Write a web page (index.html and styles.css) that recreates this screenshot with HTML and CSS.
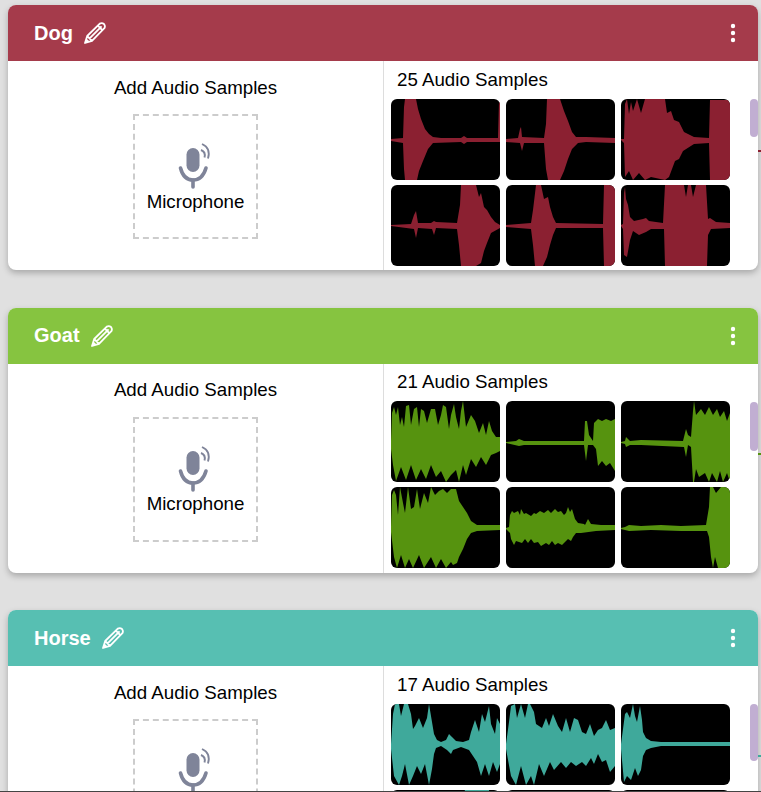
FILE: index.html
```html
<!DOCTYPE html>
<html lang="en">
<head>
<meta charset="utf-8">
<title>Audio classes</title>
<link rel="stylesheet" href="styles.css">
</head>
<body>
<svg class="defs" width="0" height="0" aria-hidden="true">
  <symbol id="pencil" viewBox="0 0 22 22">
    <path d="M1 21 L3.2 14 L15.8 1.6 Q18 .4 20 2 Q21.6 4 20.4 6.2 L8 18.8 Z M3.2 14 L8 18.8 M5.6 16.4 L17.6 4.4 M13.8 3.6 L18.4 8.2" fill="none" stroke="#fff" stroke-width="1.8" stroke-linejoin="round"/>
    <path d="M1 21 L2.4 16.4 L5.6 19.6 Z" fill="#fff"/>
  </symbol>
  <symbol id="dots" viewBox="0 0 6 20">
    <circle cx="3" cy="3" r="2.2" fill="#fff"/><circle cx="3" cy="10" r="2.2" fill="#fff"/><circle cx="3" cy="17" r="2.2" fill="#fff"/>
  </symbol>
  <symbol id="mic" viewBox="0 0 36 48">
    <rect x="8.5" y="6" width="13" height="24" rx="6.5" fill="#7f8499"/>
    <path d="M2.5 26 Q5.5 38 15 38 Q24.5 38 28 26" fill="none" stroke="#7f8499" stroke-width="3.6" stroke-linecap="round"/>
    <path d="M15 38 V45" stroke="#7f8499" stroke-width="3.6" stroke-linecap="round"/>
    <path d="M24 2 Q33 6 30 16.5 M23 8 Q28 10 26.5 15.5" fill="none" stroke="#7f8499" stroke-width="1.9"/>
  </symbol>
</svg>

<section class="card dog">
  <header class="card-head">
    <div class="title"><span>Dog</span><svg class="pencil"><use href="#pencil"/></svg></div>
    <svg class="dots"><use href="#dots"/></svg>
  </header>
  <div class="card-body">
    <div class="add">
      <h3 class="add-title">Add Audio Samples</h3>
      <div class="mic-box"><svg class="mic"><use href="#mic"/></svg><span>Microphone</span></div>
    </div>
    <div class="samples">
      <h3 class="samples-title">25 Audio Samples</h3>
      <div class="grid">
        <svg class="thumb" viewBox="0 0 109 81"><polygon points="0,40 12,39 13,8 14,0 25,0 27,10 30,20 34,30 38,35 42,38 50,39 70,39 73,37 76,39 107,39 108,2 109,2 109,43 108,43 76,43 73,45 70,43 42,44 37,50 32,62 28,72 26,81 14,81 13,70 12,44 0,42"/></svg>
        <svg class="thumb" viewBox="0 0 109 81"><polygon points="0,40 12,39 14,30 15,28 16,38 38,39 40,25 41,0 54,0 58,12 62,22 66,33 70,38 80,38 109,39 109,44 80,43 72,44 66,50 62,60 58,72 54,81 42,81 40,70 38,44 18,44 16,52 14,44 0,43"/></svg>
        <svg class="thumb" viewBox="0 0 109 81"><polygon points="0,40 3,40 4,5 6,0 8,15 10,3 12,12 16,0 20,14 24,0 44,0 46,14 50,12 53,21 58,23 63,33 73,38 88,39 89,1 109,1 109,81 89,81 88,44 73,45 62,52 58,60 54,62 48,78 44,81 30,78 24,81 18,74 12,81 8,72 4,78 3,44 0,41"/></svg>
        <svg class="thumb" viewBox="0 0 109 81"><polygon points="0,40 20,39 23,30 25,26 27,38 40,38 43,36 45,37 66,38 69,20 70,0 85,0 88,12 90,8 93,22 96,25 100,32 104,37 109,40 109,43 100,48 96,58 93,66 90,78 85,81 70,81 68,60 66,44 45,43 43,50 41,44 27,43 25,53 23,44 0,41"/></svg>
        <svg class="thumb" viewBox="0 0 109 81"><polygon points="0,40 25,38 27,25 30,0 35,0 38,14 42,12 44,22 47,32 50,38 97,39 98,0 109,0 109,81 98,81 97,43 50,43 47,50 44,60 41,72 37,81 29,81 27,60 25,44 0,42"/></svg>
        <svg class="thumb" viewBox="0 0 109 81"><polygon points="0,40 2,39 3,8 4,2 5,14 7,20 9,32 13,36 22,34 25,33 28,36 42,38 44,0 63,0 65,12 67,0 70,0 72,12 75,0 85,0 87,34 89,33 95,37 109,38 109,43 90,44 87,50 86,81 44,81 43,44 30,44 25,47 18,50 12,46 9,55 6,72 3,70 2,44 0,41"/></svg>
      </div>
      <div class="scroll scroll-dog"></div>
    </div>
  </div>
  <div class="stub"></div>
</section>

<section class="card goat">
  <header class="card-head">
    <div class="title"><span>Goat</span><svg class="pencil"><use href="#pencil"/></svg></div>
    <svg class="dots"><use href="#dots"/></svg>
  </header>
  <div class="card-body">
    <div class="add">
      <h3 class="add-title">Add Audio Samples</h3>
      <div class="mic-box"><svg class="mic"><use href="#mic"/></svg><span>Microphone</span></div>
    </div>
    <div class="samples">
      <h3 class="samples-title">21 Audio Samples</h3>
      <div class="grid">
        <svg class="thumb" viewBox="0 0 109 81"><polygon points="0,40 1,12 3,6 5,14 7,6 9,24 11,16 13,26 15,5 18,4 20,24 23,8 26,6 28,26 30,8 33,10 36,22 40,8 44,8 47,24 50,14 52,4 55,6 58,28 60,14 63,3 65,16 68,28 70,10 72,0 75,26 80,14 84,20 88,32 92,22 95,34 98,20 101,30 105,36 109,36 109,50 105,52 100,54 95,64 90,56 85,66 80,58 75,74 72,64 68,81 65,69 60,74 55,81 50,70 45,76 40,64 35,78 30,68 25,79 20,64 15,79 10,66 5,80 2,64 0,48"/></svg>
        <svg class="thumb" viewBox="0 0 109 81"><polygon points="0,41 10,40 13,38 18,40 78,40 79,20 81,20 83,34 87,40 88,22 92,18 96,20 100,18 105,20 109,18 109,70 104,62 100,65 96,60 92,65 90,48 87,44 82,44 80,60 78,44 18,44 13,45 0,42"/></svg>
        <svg class="thumb" viewBox="0 0 109 81"><polygon points="0,41 4,40 5,36 9,40 20,39 62,40 64,32 65,28 67,34 70,36 72,10 73,0 75,14 80,8 84,14 88,6 92,14 96,8 99,16 103,10 106,20 109,12 109,81 106,72 102,81 99,70 96,81 91,72 88,81 84,72 78,76 75,68 73,81 72,81 70,46 67,44 65,56 63,46 20,44 9,44 5,46 4,43 0,42"/></svg>
        <svg class="thumb" viewBox="0 0 109 81"><polygon points="0,40 1,8 3,3 5,8 7,28 9,0 12,16 14,26 17,0 20,22 23,20 26,2 29,22 33,6 37,16 40,0 44,8 48,4 52,2 56,6 60,2 65,2 68,14 72,20 76,26 80,34 86,38 109,38 109,43 86,44 80,46 76,52 72,62 68,70 66,76 62,78 60,75 55,81 50,72 45,81 40,70 33,81 28,68 22,81 18,72 14,81 10,68 6,81 3,70 0,45"/></svg>
        <svg class="thumb" viewBox="0 0 109 81"><polygon points="0,41 3,40 4,28 6,24 8,26 12,24 14,28 15,22 18,27 20,26 25,29 28,26 30,27 34,24 38,26 42,23 45,26 49,22 52,25 55,24 58,28 60,26 62,20 64,25 66,22 69,32 72,36 78,37 79,38 82,32 85,37 95,38 109,38 109,43 90,44 75,46 70,46 67,50 65,54 62,52 58,56 56,58 52,56 49,58 46,54 43,58 40,56 35,59 32,55 28,56 25,52 22,56 19,52 16,56 10,54 8,58 5,52 4,46 0,42"/></svg>
        <svg class="thumb" viewBox="0 0 109 81"><polygon points="0,41 4,40 8,38 20,39 40,38 60,39 85,38 88,20 89,0 92,0 95,6 100,0 109,0 109,81 97,81 94,70 92,81 90,70 88,50 86,44 60,44 30,43 8,44 0,42"/></svg>
      </div>
      <div class="scroll scroll-goat"></div>
    </div>
  </div>
  <div class="stub"></div>
</section>

<section class="card horse">
  <header class="card-head">
    <div class="title"><span>Horse</span><svg class="pencil"><use href="#pencil"/></svg></div>
    <svg class="dots"><use href="#dots"/></svg>
  </header>
  <div class="card-body">
    <div class="add">
      <h3 class="add-title">Add Audio Samples</h3>
      <div class="mic-box"><svg class="mic"><use href="#mic"/></svg><span>Microphone</span></div>
    </div>
    <div class="samples">
      <h3 class="samples-title">17 Audio Samples</h3>
      <div class="grid">
        <svg class="thumb" viewBox="0 0 109 81"><polygon points="0,40 2,10 4,0 8,0 10,12 13,0 17,0 20,10 22,25 24,22 28,14 32,24 36,14 38,0 41,18 43,30 46,36 50,38 55,36 58,30 61,33 65,37 72,38 78,36 80,28 84,16 88,28 91,10 94,18 98,2 100,20 104,30 106,14 109,20 109,60 106,68 102,58 98,72 94,60 90,72 86,58 82,52 78,46 70,43 62,46 60,50 56,46 50,42 45,44 43,50 41,65 38,81 34,60 30,70 26,62 22,72 18,81 14,60 11,72 8,81 3,72 0,45"/></svg>
        <svg class="thumb" viewBox="0 0 109 81"><polygon points="0,40 3,18 5,2 9,0 11,14 15,0 19,14 22,0 24,0 28,8 30,20 33,22 36,24 40,14 43,22 47,10 52,22 56,28 60,14 64,28 68,14 72,16 76,28 80,30 84,20 88,32 92,26 96,24 100,16 104,26 109,24 109,62 104,68 100,56 96,58 92,50 88,60 85,54 80,62 76,58 70,62 65,58 60,64 55,58 48,66 44,58 38,72 33,60 28,81 25,72 20,81 15,62 10,81 5,72 0,45"/></svg>
        <svg class="thumb" viewBox="0 0 109 81"><polygon points="0,40 4,10 6,8 9,14 12,0 14,12 16,18 19,2 21,16 22,28 25,34 30,37 40,38 109,38 109,42 40,42 30,44 25,46 22,52 20,66 17,72 14,64 10,76 6,72 3,78 0,45"/></svg>
        <svg class="thumb" viewBox="0 0 109 81"><polygon points="0,40 60,40 74,0 98,0 100,40 109,40 109,42 0,42"/></svg>
        <svg class="thumb" viewBox="0 0 109 81"><polygon points="0,40 109,40 109,42 0,42"/></svg>
        <svg class="thumb" viewBox="0 0 109 81"><polygon points="0,40 109,40 109,42 0,42"/></svg>
      </div>
      <div class="scroll scroll-horse"></div>
    </div>
  </div>
  <div class="stub"></div>
</section>

<div class="bottom-edge"></div>
</body>
</html>
```
FILE: styles.css
```css
* { box-sizing: border-box; }
html, body { height: 792px; overflow: hidden; }
body {
  margin: 0;
  padding: 5px 3px 0 8px;
  background: #e0e0e0;
  font-family: "Liberation Sans", Arial, sans-serif;
  color: #000;
}
.defs { position: absolute; }

.dog { --head: #a53b4b; --wave: #8b2031; }
.goat { --head: #86c440; --wave: #56930f; }
.horse { --head: #57bfb2; --wave: #3fa99b; }

.card {
  position: relative;
  flex: none;
  height: 265px;
  margin-bottom: 37.6px;
  border-radius: 8px;
  background: #fff;
  box-shadow: 0 3px 6px rgba(0, 0, 0, .25);
}
.card-head {
  display: flex;
  align-items: center;
  justify-content: space-between;
  height: 56px;
  padding: 0 22px 0 26px;
  border-radius: 8px 8px 0 0;
  background: var(--head);
  color: #fff;
}
.title {
  display: flex;
  align-items: center;
  gap: 11px;
  font-size: 20px;
  font-weight: 700;
}
.pencil { width: 22px; height: 22px; }
.dots { width: 6px; height: 20px; }

.card-body {
  display: flex;
  height: 209px;
  overflow: hidden;
  border-radius: 0 0 8px 8px;
}
.add {
  display: flex;
  flex-direction: column;
  align-items: center;
  width: 375px;
  padding-top: 15.7px;
}
.add-title, .samples-title {
  margin: 0;
  font-size: 18.72px;
  font-weight: 400;
}
.add-title { margin-bottom: 15.3px; }
.mic-box {
  display: flex;
  flex-direction: column;
  align-items: center;
  width: 125px;
  height: 125px;
  padding-top: 26px;
  border: 2px dashed #ccc;
  font-size: 18.72px;
}
.mic { width: 36px; height: 48px; margin-bottom: .7px; }

.samples {
  position: relative;
  flex: 1;
  padding: 7.7px 0 0 7px;
  border-left: 1px solid #ddd;
}
.samples-title { margin: 0 0 8px 6px; }
.grid {
  display: grid;
  grid-template-columns: repeat(3, 109px);
  grid-auto-rows: 81px;
  gap: 5px 6px;
}
.thumb {
  display: block;
  width: 109px;
  height: 81px;
  border-radius: 6px;
  background: #000;
  fill: var(--wave);
}
.thumb polygon { filter: blur(.35px); }
.scroll {
  position: absolute;
  top: 38px;
  right: 0;
  width: 8px;
  border-radius: 4px;
  background: #c1aed2;
}
.scroll-dog { height: 38px; }
.scroll-goat { height: 49px; }
.scroll-horse { height: 57px; }

.stub {
  position: absolute;
  top: 145px;
  left: 100%;
  width: 3px;
  height: 2px;
  background: var(--wave);
}
.bottom-edge {
  position: fixed;
  left: 0;
  right: 0;
  bottom: 0;
  height: 1px;
  background: #444;
}
```
